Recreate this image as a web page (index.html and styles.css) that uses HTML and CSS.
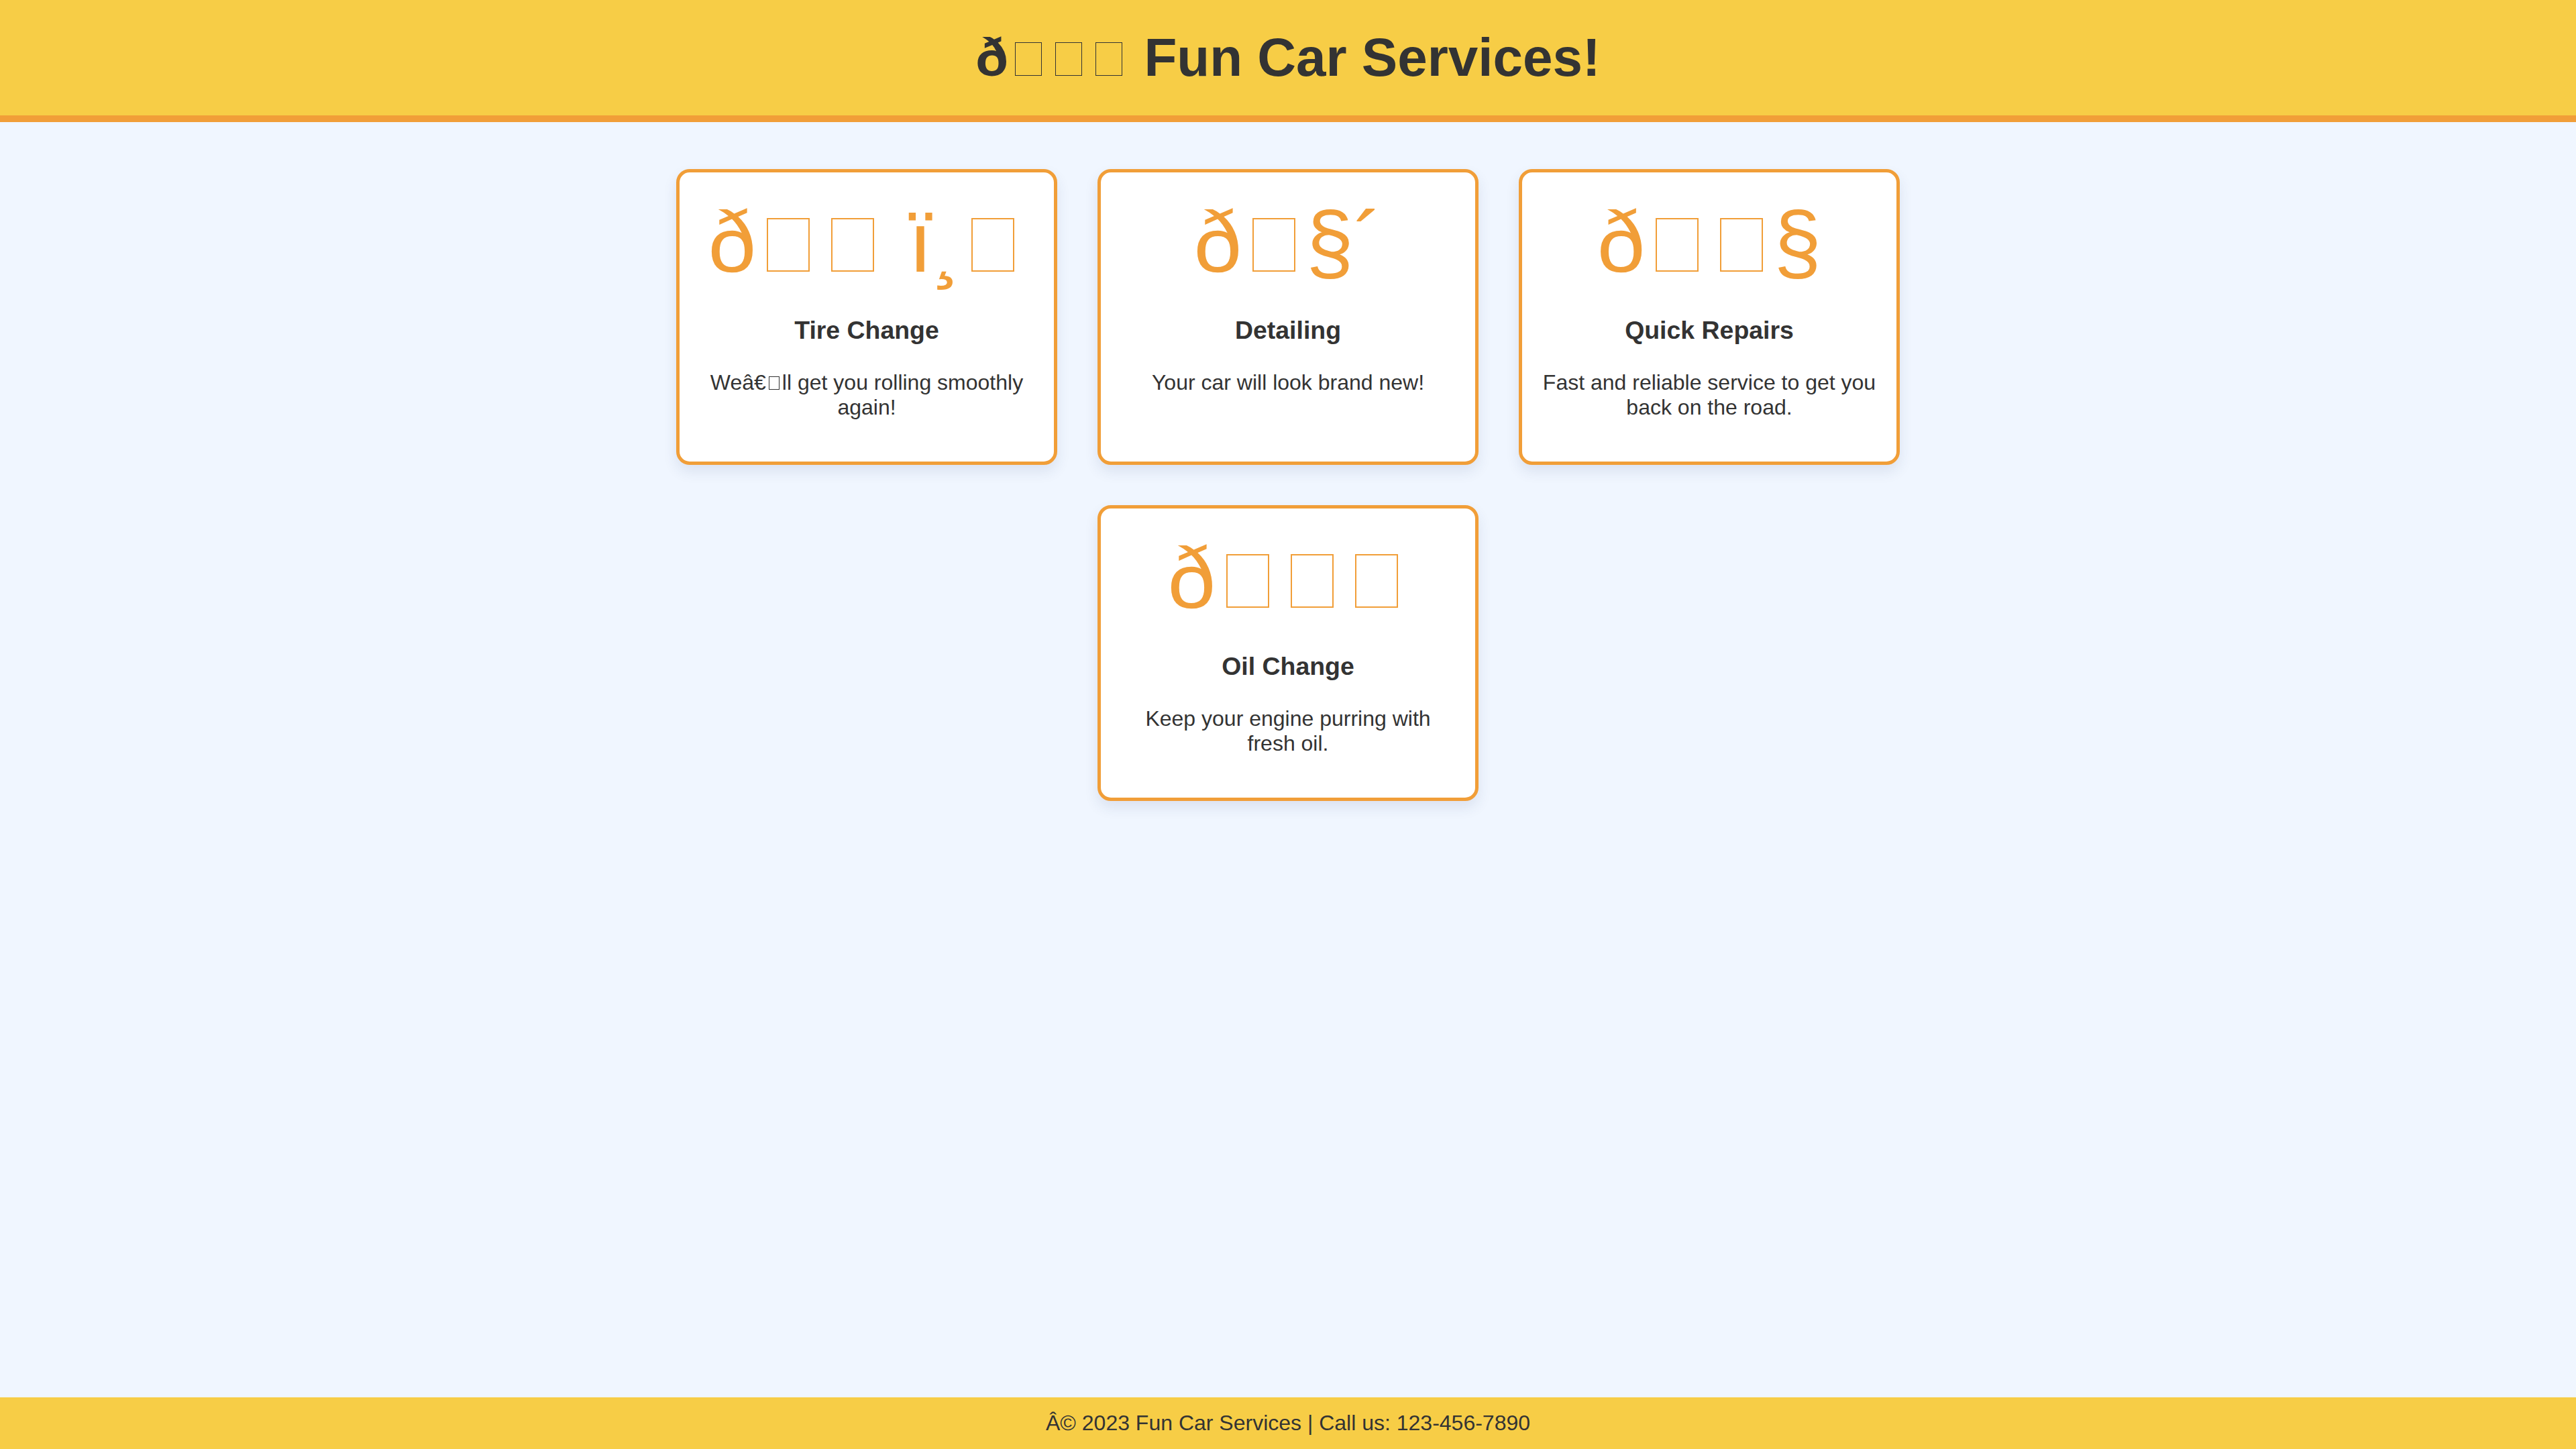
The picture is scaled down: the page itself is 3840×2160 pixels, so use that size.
FILE: index.html
```html
<!DOCTYPE html>
<html lang="en">
<head>
<meta charset="UTF-8">
<title>Fun Car Services</title>
<link rel="stylesheet" href="styles.css">
</head>
<body>
<header class="site-header">
  <h1 class="site-title">ð<span class="tofu"></span><span class="tofu"></span><span class="tofu"></span> Fun Car Services!</h1>
</header>
<main class="services">
  <div class="service-card">
    <div class="service-icon">ð<span class="tofu"></span><span class="tofu"></span>&nbsp;ï¸<span class="tofu"></span></div>
    <h3 class="service-name">Tire Change</h3>
    <p class="service-text">Weâ€<span class="tofu"></span>ll get you rolling smoothly again!</p>
  </div>
  <div class="service-card">
    <div class="service-icon">ð<span class="tofu"></span>§´</div>
    <h3 class="service-name">Detailing</h3>
    <p class="service-text">Your car will look brand new!</p>
  </div>
  <div class="service-card">
    <div class="service-icon">ð<span class="tofu"></span><span class="tofu"></span>§</div>
    <h3 class="service-name">Quick Repairs</h3>
    <p class="service-text">Fast and reliable service to get you back on the road.</p>
  </div>
  <div class="service-card">
    <div class="service-icon">ð<span class="tofu"></span><span class="tofu"></span><span class="tofu"></span></div>
    <h3 class="service-name">Oil Change</h3>
    <p class="service-text">Keep your engine purring with fresh oil.</p>
  </div>
</main>
<footer class="site-footer">Â© 2023 Fun Car Services | Call us: 123-456-7890</footer>
</body>
</html>
```
FILE: styles.css
```css
html, body {
  margin: 0;
  padding: 0;
}

body {
  font-family: "Liberation Sans", Arial, sans-serif;
  font-size: 40px;
  color: #333333;
  background: #f0f6ff;
  min-height: 100vh;
  display: flex;
  flex-direction: column;
}

.site-header {
  background: #f7cd46;
  border-bottom: 10px solid #f19e38;
  padding: 40px;
  text-align: center;
}

.site-title {
  margin: 0;
  font-size: 80px;
  font-weight: bold;
  color: #333333;
}

/* missing-glyph box, drawn like the font's .notdef outline */
.tofu {
  display: inline-block;
  width: 0.5em;
  height: 0.625em;
  margin: 0 0.125em;
  border: 0.021em solid currentColor;
  box-sizing: border-box;
  vertical-align: baseline;
}

.services {
  flex: 1;
  display: flex;
  flex-wrap: wrap;
  justify-content: center;
  align-content: flex-start;
  max-width: 2000px;
  width: 100%;
  margin: 0 auto;
  padding: 40px 0;
  box-sizing: border-box;
}

.service-card {
  width: 498px;
  margin: 30px;
  padding: 30px;
  background: #ffffff;
  border: 5px solid #f19e38;
  border-radius: 20px;
  box-shadow: 0 10px 20px rgba(40, 60, 110, 0.1);
  text-align: center;
  font-size: 32px;
}

.service-icon {
  font-size: 128px;
  color: #f19e38;
}

.service-name {
  font-size: 1.17em;
  margin: 1em 0;
  color: #333333;
}

.service-text {
  margin: 1em 0;
  color: #333333;
}

.site-footer {
  background: #f7cd46;
  padding: 20px;
  text-align: center;
  font-size: 32px;
  color: #333333;
}
```
